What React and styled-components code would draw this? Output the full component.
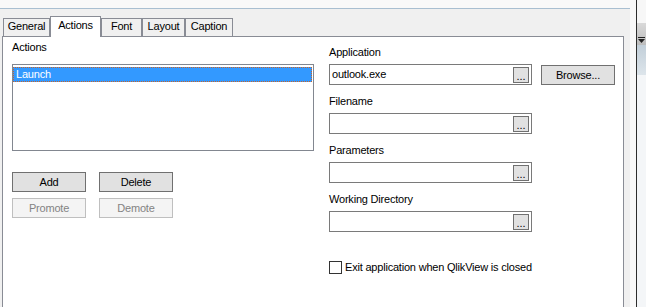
import React from "react";
import styled, { createGlobalStyle } from "styled-components";

const GlobalStyle = createGlobalStyle`
  html, body {
    margin: 0;
    padding: 0;
    background: #f0f0f0;
  }
  body {
    font-family: "Liberation Sans", Arial, sans-serif;
    font-size: 11px;
    letter-spacing: -0.2px;
    color: #000;
  }
`;

const tabs = [
  { name: "General", width: 47 },
  { name: "Actions", width: 51 },
  { name: "Font", width: 41 },
  { name: "Layout", width: 43 },
  { name: "Caption", width: 48 },
];

const fields = [
  { label: "Application", value: "outlook.exe", browse: true },
  { label: "Filename", value: "" },
  { label: "Parameters", value: "" },
  { label: "Working Directory", value: "" },
];

const App = () => {
  return (
    <>
      <GlobalStyle />
      <Screen>
        <Dialog>
          <TitleEdge />
          <DialogBody>
            <TabStrip>
              {tabs.map((t) => (
                <Tab key={t.name} $active={t.name === "Actions"} $w={t.width}>
                  {t.name}
                </Tab>
              ))}
            </TabStrip>
            <Panel>
              <LeftCol>
                <Label>Actions</Label>
                <ListBox>
                  <ListItem>Launch</ListItem>
                </ListBox>
                <ButtonGrid>
                  <PushButton>Add</PushButton>
                  <PushButton>Delete</PushButton>
                  <PushButton disabled>Promote</PushButton>
                  <PushButton disabled>Demote</PushButton>
                </ButtonGrid>
              </LeftCol>
              <RightCol>
                {fields.map((f) => (
                  <FieldGroup key={f.label}>
                    <Label>{f.label}</Label>
                    <FieldRow>
                      <TextField>
                        <FieldValue>{f.value}</FieldValue>
                        <DotsButton>...</DotsButton>
                      </TextField>
                      {f.browse && <BrowseButton>Browse...</BrowseButton>}
                    </FieldRow>
                  </FieldGroup>
                ))}
                <CheckRow>
                  <CheckBox />
                  <span>Exit application when QlikView is closed</span>
                </CheckRow>
              </RightCol>
            </Panel>
          </DialogBody>
        </Dialog>
        <FrameEdge />
        <ScrollStrip>
          <ScrollTop />
          <ScrollButton>
            <svg width="7" height="6" viewBox="0 0 7 6">
              <rect x="0" y="0" width="7" height="1" fill="#222" />
              <path d="M0 2 H7 L3.5 6 Z" fill="#222" />
            </svg>
          </ScrollButton>
          <ScrollThumb />
        </ScrollStrip>
      </Screen>
    </>
  );
};

export default App;

const Screen = styled.div`
  display: flex;
  width: 646px;
  height: 307px;
  overflow: hidden;
`;

const Dialog = styled.div`
  width: 630px;
  flex-shrink: 0;
  display: flex;
  flex-direction: column;
  background: #f0f0f0;
  overflow: hidden;
`;

const TitleEdge = styled.div`
  flex-shrink: 0;
  height: 8px;
  background: #f9f9f9;
  border-bottom: 1px solid #a9bfd1;
`;

const DialogBody = styled.div`
  flex-shrink: 0;
  padding: 7px 6px 0 2px;
`;

const TabStrip = styled.div`
  display: flex;
  align-items: flex-end;
  height: 21px;
  padding-left: 1px;
  margin-bottom: -1px;
  position: relative;
  z-index: 1;
`;

const Tab = styled.div`
  box-sizing: border-box;
  width: ${(p) => p.$w}px;
  height: ${(p) => (p.$active ? 21 : 18)}px;
  margin-bottom: ${(p) => (p.$active ? 0 : 1)}px;
  padding-top: ${(p) => (p.$active ? 2 : 1)}px;
  line-height: 13px;
  text-align: center;
  background: ${(p) => (p.$active ? "#ffffff" : "#f0f0f0")};
  border: 1px solid #898c95;
  border-bottom: none;
`;

const Panel = styled.div`
  height: 300px;
  box-sizing: border-box;
  background: #ffffff;
  border: 1px solid #898c95;
  display: grid;
  grid-template-columns: 302px auto;
  column-gap: 15px;
  align-items: start;
  padding-left: 9px;
`;

const LeftCol = styled.div`
  display: flex;
  flex-direction: column;
  padding-top: 4px;
`;

const RightCol = styled.div`
  display: flex;
  flex-direction: column;
  padding-top: 9px;
`;

const Label = styled.div`
  line-height: 13px;
  height: 13px;
  white-space: nowrap;
`;

const ListBox = styled.div`
  margin-top: 10px;
  height: 87px;
  box-sizing: border-box;
  border: 1px solid #828790;
  padding: 2px 1px 0 0;
`;

const ListItem = styled.div`
  height: 15px;
  box-sizing: border-box;
  line-height: 13px;
  padding-left: 2px;
  background: #3399ff;
  color: #ffffff;
  border: 1px dotted #c8642a;
`;

const ButtonGrid = styled.div`
  margin-top: 21px;
  display: grid;
  grid-template-columns: 74px 74px;
  column-gap: 13px;
  row-gap: 6px;
`;

const PushButton = styled.div`
  height: 20px;
  box-sizing: border-box;
  display: flex;
  align-items: center;
  justify-content: center;
  background: ${(p) => (p.disabled ? "#f4f4f4" : "#e1e1e1")};
  border: 1px solid ${(p) => (p.disabled ? "#bfbfbf" : "#707070")};
  color: ${(p) => (p.disabled ? "#838383" : "#000")};
`;

const FieldGroup = styled.div`
  display: flex;
  flex-direction: column;
  gap: 5px;
  margin-bottom: 10px;
`;

const FieldRow = styled.div`
  display: flex;
  align-items: center;
  gap: 9px;
`;

const TextField = styled.div`
  width: 203px;
  height: 21px;
  box-sizing: border-box;
  border: 1px solid #7a7a7a;
  background: #fff;
  display: flex;
  align-items: center;
  padding: 0 2px 0 2px;
`;

const FieldValue = styled.span`
  flex: 1;
  line-height: 13px;
`;

const DotsButton = styled.div`
  width: 16px;
  height: 16px;
  box-sizing: border-box;
  border: 1px solid #707070;
  background: #e1e1e1;
  display: flex;
  align-items: flex-end;
  justify-content: center;
  line-height: 11px;
  letter-spacing: 0;
`;

const BrowseButton = styled.div`
  width: 74px;
  height: 20px;
  box-sizing: border-box;
  border: 1px solid #707070;
  background: #e1e1e1;
  display: flex;
  align-items: center;
  justify-content: center;
`;

const CheckRow = styled.div`
  margin-top: 19px;
  display: flex;
  align-items: center;
  gap: 3px;
  line-height: 13px;
  white-space: nowrap;
`;

const CheckBox = styled.div`
  width: 13px;
  height: 13px;
  box-sizing: border-box;
  border: 1px solid #333333;
  background: #fff;
`;

const FrameEdge = styled.div`
  width: 6px;
  flex-shrink: 0;
  background: #f9f9f9;
  border-right: 1px solid #2d2d2d;
`;

const ScrollStrip = styled.div`
  width: 9px;
  flex-shrink: 0;
  display: flex;
  flex-direction: column;
  background: #f4f6f8;
`;

const ScrollTop = styled.div`
  height: 23px;
  background: #f7f7f7;
`;

const ScrollButton = styled.div`
  height: 22px;
  box-sizing: border-box;
  background: linear-gradient(#d9d9d9, #bdbdbd);
  display: flex;
  align-items: flex-end;
  justify-content: center;
  padding-bottom: 2px;
`;

const ScrollThumb = styled.div`
  height: 30px;
  background: linear-gradient(#c2cfd9, #dde5eb);
`;
